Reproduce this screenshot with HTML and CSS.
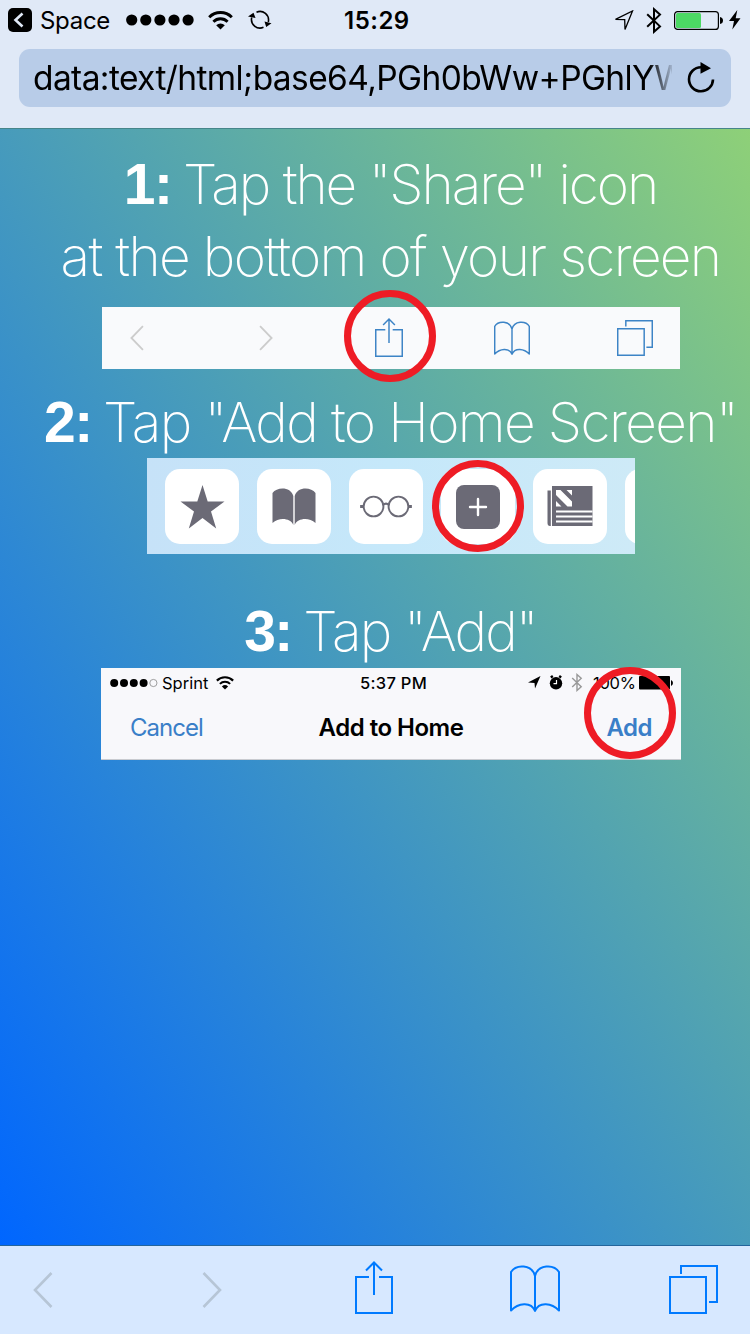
FILE: index.html
```html
<!DOCTYPE html>
<html lang="en">
<head>
<meta charset="utf-8">
<title>Add to Home Screen</title>
<link rel="stylesheet" href="styles.css">
</head>
<body>
<svg class="defs" width="0" height="0" aria-hidden="true">
  <symbol id="wifi" viewBox="0 0 25 19">
    <path d="M1.2 6.2A16 16 0 0 1 23.8 6.2" fill="none" stroke="currentColor" stroke-width="3"/>
    <path d="M5.4 10.7A10 10 0 0 1 19.6 10.7" fill="none" stroke="currentColor" stroke-width="2.8"/>
    <path d="M12.5 18.6L8.2 14.3A6.2 6.2 0 0 1 16.8 14.3Z" fill="currentColor"/>
  </symbol>
  <symbol id="bluetooth" viewBox="0 0 16 27">
    <path d="M1.2 7.2L14 19.4L8 24.8V2.2L14 7.6L1.2 19.8" fill="none" stroke="currentColor" stroke-width="2"/>
  </symbol>
  <symbol id="share" viewBox="0 0 38 53">
    <path d="M14 16H1V52H37V16H24M19 34V2M11 9.500L19 1.500L27 9.500" fill="none" stroke="currentColor" stroke-width="2"/>
  </symbol>
  <symbol id="book" viewBox="0 0 50 48">
    <path d="M25 46V11C22 -1 6 -1 1 7V45.500C8 38 21 36 25 46C29 36 42 38 49 45.500V7C44 -1 28 -1 25 11" fill="none" stroke="currentColor" stroke-width="2" stroke-linejoin="round"/>
  </symbol>
  <symbol id="tabs" viewBox="0 0 49 49">
    <path d="M1 12H37V48H1ZM12 9V1H48V37H40" fill="none" stroke="currentColor" stroke-width="2"/>
  </symbol>
  <symbol id="back" viewBox="0 0 20 36">
    <path d="M18.500 1L2 18L18.500 35" fill="none" stroke="currentColor" stroke-width="2.600"/>
  </symbol>
  <symbol id="forward" viewBox="0 0 20 36">
    <path d="M1.500 1L18 18L1.500 35" fill="none" stroke="currentColor" stroke-width="2.600"/>
  </symbol>
</svg>

<header class="browser">
  <div class="status">
    <div class="status-left">
      <svg class="return" width="24" height="24" viewBox="0 0 24 24"><rect width="24" height="24" rx="5"/><path d="M14.500 5.500L7.500 12L14.500 18.500" fill="none" stroke="#e0e9f7" stroke-width="2.600"/></svg>
      <span class="app">Space</span>
      <svg class="signal" width="68" height="12" viewBox="0 0 68 12"><circle cx="5.700" cy="6" r="5.600"/><circle cx="19.800" cy="6" r="5.600"/><circle cx="33.900" cy="6" r="5.600"/><circle cx="48" cy="6" r="5.600"/><circle cx="62.100" cy="6" r="5.600"/></svg>
      <svg class="wifi" width="25" height="19"><use href="#wifi"/></svg>
      <svg class="sync" width="24" height="20" viewBox="0 0 24 20"><path d="M8.500 2.200A8.600 8.600 0 0 1 20.300 12M15.500 17.300A8.600 8.600 0 0 1 3.700 7.500" fill="none" stroke="#000" stroke-width="1.600"/><path d="M16.500 11.500L23.500 13.200L18.200 17Z M0 6.500L7.500 8L5.500 2.800Z"/></svg>
    </div>
    <time>15:29</time>
    <div class="status-right">
      <svg width="20" height="21" viewBox="0 0 20 21"><path d="M1.500 9.300L18.500 1L11 19.500L10.700 9.700Z" fill="none" stroke="#000" stroke-width="1.300"/></svg>
      <svg class="bt" width="16" height="27"><use href="#bluetooth"/></svg>
      <svg class="battery" width="49" height="19" viewBox="0 0 49 19"><rect x=".6" y=".6" width="43.800" height="17.800" rx="3" fill="none" stroke="#000" stroke-width="1.200"/><rect x="2" y="2" width="25" height="15" rx="1.500" fill="#4cd964"/><path d="M46 6Q49 6.500 49 9.500T46 13Z"/></svg>
      <svg class="bolt" width="12" height="20" viewBox="0 0 12 20"><path d="M8.300 0L0 11H5L3.300 19.500L11.500 8.200H6.700Z"/></svg>
    </div>
  </div>
  <div class="address">
    <span class="url">data:text/html;base64,PGh0bWw+PGhlYW</span>
    <svg class="reload" width="28" height="31" viewBox="0 0 28 31"><path d="M14 5.300A12 12 0 1 0 26 17.500" fill="none" stroke="#000" stroke-width="2.600"/><path d="M13.500 0L24 6.200L13.500 11.800Z"/></svg>
  </div>
</header>

<main>
  <h2 class="line one"><strong>1:</strong> <span>Tap the "Share" icon</span></h2>
  <h2 class="line one-b"><span>at the bottom of your screen</span></h2>
  <section class="panel safari">
    <svg class="grey p-back" width="14" height="26"><use href="#back"/></svg>
    <svg class="grey p-forward" width="14" height="26"><use href="#forward"/></svg>
    <svg class="p-share" width="28" height="39"><use href="#share"/></svg>
    <svg class="p-book" width="36" height="35"><use href="#book"/></svg>
    <svg class="p-tabs" width="36" height="36"><use href="#tabs"/></svg>
    <i class="ring"></i>
  </section>

  <h2 class="line two"><strong>2:</strong> <span>Tap "Add to Home Screen"</span></h2>
  <section class="panel actions">
    <div class="tiles">
      <div class="tile"><svg width="45" height="44" viewBox="0 0 45 44"><path d="M22.500 0L27.700 16.500H44.500L31 26.500L36.200 43.500L22.500 33L8.800 43.500L14 26.500L.5 16.500H17.300Z"/></svg></div>
      <div class="tile"><svg width="44" height="38" viewBox="0 0 44 38"><path d="M21.300 37C18.500 30 7 29 .5 35V5C5 -1.500 19 -1.500 21.300 8ZM22.700 37C25.500 30 37 29 43.500 35V5C39 -1.500 25 -1.500 22.700 8Z"/></svg></div>
      <div class="tile"><svg width="52" height="23" viewBox="0 0 54 24"><g fill="none" stroke="#6b6a76" stroke-width="2"><circle cx="14" cy="12" r="10.300"/><circle cx="40" cy="12" r="10.300"/><path d="M23.800 10.500Q27 7.500 30.200 10.500"/></g><path d="M0 10.500H4V13.500H0ZM50 10.500H54V13.500H50Z"/></svg></div>
      <div class="tile"><svg width="44" height="44" viewBox="0 0 44 44"><rect width="44" height="44" rx="8"/><path d="M22 14V30M14 22H30" stroke="#fff" stroke-width="2.400" stroke-linecap="round"/></svg></div>
      <div class="tile"><svg width="46" height="41" viewBox="0 0 46 41"><path d="M5 0H45.500V40H5ZM3.800 4.500V40H3Q.5 40 .5 37V4.500Z"/><path d="M9 4H13.500L25 15.500V20.500H20.500L9 9ZM19.500 4H25V9.500ZM9 15V20.500H14.500Z" fill="#fff"/><path d="M9 25.500H45.500M9 30.500H45.500M9 35.500H45.500" stroke="#fff" stroke-width="2"/></svg></div>
      <div class="tile"></div>
    </div>
    <i class="ring"></i>
  </section>

  <h2 class="line three"><strong>3:</strong> <span>Tap "Add"</span></h2>
  <section class="panel confirm">
    <div class="mini-status">
      <svg class="mini-signal" width="48" height="10" viewBox="0 0 48 10"><circle cx="4.200" cy="5" r="4"/><circle cx="14" cy="5" r="4"/><circle cx="23.800" cy="5" r="4"/><circle cx="33.600" cy="5" r="4"/><circle cx="43.400" cy="5" r="3.600" fill="none" stroke="#888" stroke-width=".8"/></svg>
      <span class="carrier">Sprint</span>
      <svg class="mini-wifi" width="18" height="14"><use href="#wifi"/></svg>
      <span class="mini-time">5:37 PM</span>
      <svg class="mini-loc" width="13" height="13" viewBox="0 0 13 13"><path d="M0 6.500L12.500 0L7 12.500L6.500 7Z"/></svg>
      <svg class="alarm" width="14" height="15" viewBox="0 0 14 15"><circle cx="7" cy="8.300" r="6.200"/><path d="M1.800 2.500L3.800 1M12.200 2.500L10.200 1" stroke="#000" stroke-width="2.200"/><path d="M7.500 5V8.700H4.500" fill="none" stroke="#fff" stroke-width="1.200"/></svg>
      <svg class="mini-bt" width="12" height="19"><use href="#bluetooth"/></svg>
      <span class="percent">100%</span>
      <svg class="mini-battery" width="34" height="14" viewBox="0 0 34 14"><rect width="31" height="13.500" rx="1"/><path d="M32 4Q34 5 34 7T32 10Z"/></svg>
    </div>
    <div class="nav">
      <span class="cancel">Cancel</span>
      <b class="title">Add to Home</b>
      <b class="add">Add</b>
    </div>
    <i class="ring"></i>
  </section>
</main>

<footer class="toolbar">
  <svg class="grey" width="20" height="36"><use href="#back"/></svg>
  <svg class="grey t-forward" width="20" height="36"><use href="#forward"/></svg>
  <svg class="t-share" width="38" height="53"><use href="#share"/></svg>
  <svg class="t-book" width="50" height="48"><use href="#book"/></svg>
  <svg class="t-tabs" width="49" height="49"><use href="#tabs"/></svg>
</footer>
</body>
</html>
```
FILE: styles.css
```css
* { box-sizing: border-box; }
body {
  margin: 0;
  width: 750px;
  height: 1334px;
  overflow: hidden;
  display: flex;
  flex-direction: column;
  font-family: Inter, "Liberation Sans", sans-serif;
  color: #000;
}
svg { display: block; flex: none; }
.defs { position: absolute; }
span, b, time { white-space: nowrap; }

/* Browser chrome */
.browser {
  height: 129px;
  flex: none;
  background: #e0e9f7;
  border-bottom: 1px solid #46858a;
}
.status {
  height: 40px;
  display: grid;
  grid-template-columns: 344px 1fr 136px;
  align-items: center;
}
.status-left, .status-right { display: flex; align-items: center; }
.status-left { padding-left: 8px; }
.app { font-size: 24px; width: 78px; padding-left: 8px; letter-spacing: -.3px; }
.signal { margin-left: 16px; }
.status-left .wifi { margin-left: 14px; }
.sync { margin-left: 15px; }
time { font-size: 24px; font-weight: 600; letter-spacing: .5px; }
.bt { margin-left: 12px; }
.battery { margin-left: 12px; }
.bolt { margin-left: 6px; }
.address {
  height: 58px;
  margin: 9px 19px 0;
  padding: 0 16px 0 14px;
  border-radius: 11px;
  background: #b8cce8;
  display: flex;
  align-items: center;
  justify-content: space-between;
}
.url {
  width: 639px;
  overflow: hidden;
  font-size: 33.500px;
  letter-spacing: -.600px;
  line-height: 56px;
  -webkit-mask-image: linear-gradient(to right, #000 616px, transparent 642px);
  mask-image: linear-gradient(to right, #000 616px, transparent 642px);
}
.reload { margin-top: -2px; }

/* Instructions */
main {
  flex: 1;
  padding-top: 19px;
  display: flex;
  flex-direction: column;
  align-items: center;
  background: linear-gradient(to top right, #0066ff, #8ed078);
}
.line {
  flex: none;
  margin: 0 0 0 31px;
  height: 72px;
  line-height: 72px;
  font-size: 55px;
  font-weight: 170;
  color: #fff;
  white-space: nowrap;
}
.line strong {
  font: bold 57px/0 "Liberation Sans", sans-serif;
  letter-spacing: -1.500px;
  margin-right: -4px;
}
.one span { letter-spacing: -2.050px; }
.one-b span { letter-spacing: -1.680px; }
.two span { letter-spacing: -1.620px; }
.three span { letter-spacing: -1.800px; }
.panel { position: relative; flex: none; align-self: flex-start; }
.ring {
  position: absolute;
  width: 92px;
  height: 92px;
  border: 7.5px solid #ee1c25;
  border-radius: 50%;
}
.grey { color: #b6c5d6; }

.safari {
  width: 578px;
  height: 62px;
  margin: 15px 0 17px 102px;
  padding-left: 28px;
  background: #f9fafc;
  color: #3d84c6;
  display: flex;
  align-items: center;
}
.safari .grey { color: #ccc; }
.p-forward { margin-left: 115px; }
.p-share { margin: -2px 0 0 102px; }
.p-book { margin-left: 91px; }
.p-tabs { margin-left: 87px; }
.safari .ring { left: 241.5px; top: -17px; }

.actions {
  width: 488px;
  height: 96px;
  margin-left: 147px;
  background: linear-gradient(90deg, #c6e2f8, #c5e8fa 50%, #ceeaf7);
}
.tiles {
  height: 96px;
  padding: 1px 0 0 18px;
  display: flex;
  align-items: center;
  gap: 18px;
  overflow: hidden;
  fill: #6b6a76;
}
.tile {
  flex: none;
  width: 74px;
  height: 75px;
  border-radius: 15px;
  background: #fff;
  display: flex;
  align-items: center;
  justify-content: center;
}
.actions .ring { left: 285px; top: 2px; }

.three { margin-top: 41px; }
.confirm {
  width: 580px;
  height: 92px;
  margin-left: 101px;
  margin-top: 1px;
  background: #f8f8fb;
  border-bottom: 1.500px solid #c9cbd0;
}
.mini-status {
  height: 29px;
  padding-left: 9px;
  display: flex;
  align-items: center;
  font-size: 16.500px;
}
.carrier { width: 54px; padding-left: 4px; }
.mini-wifi { margin-left: 4px; }
.mini-time { width: 68px; margin-left: 126px; font-weight: 500; letter-spacing: .3px; }
.mini-loc { margin-left: 100px; }
.alarm { margin-left: 8px; }
.mini-bt { margin-left: 8px; color: #999; }
.percent { width: 52px; padding-left: 10px; letter-spacing: -.3px; }
.mini-battery { margin-left: 4px; }
.nav {
  height: 60px;
  padding: 0 29px;
  display: grid;
  grid-template-columns: 1fr auto 1fr;
  align-items: center;
  font-size: 24px;
  letter-spacing: -.5px;
}
.nav b { font-weight: 600; }
.cancel, .add { color: #3a7fc8; }
.cancel { letter-spacing: -1px; }
.add { text-align: right; }
.confirm .ring { left: 482.500px; top: -1.500px; }

/* Bottom toolbar */
.toolbar {
  height: 89px;
  flex: none;
  padding-left: 33px;
  display: flex;
  align-items: center;
  background: #d7e8ff;
  border-top: 1px solid #24659c;
  color: #007aff;
}
.t-forward { margin-left: 149px; }
.t-share { margin: -6px 0 0 133px; }
.t-book { margin: -2px 0 0 117px; }
.t-tabs { margin: -2px 0 0 109px; }
```
